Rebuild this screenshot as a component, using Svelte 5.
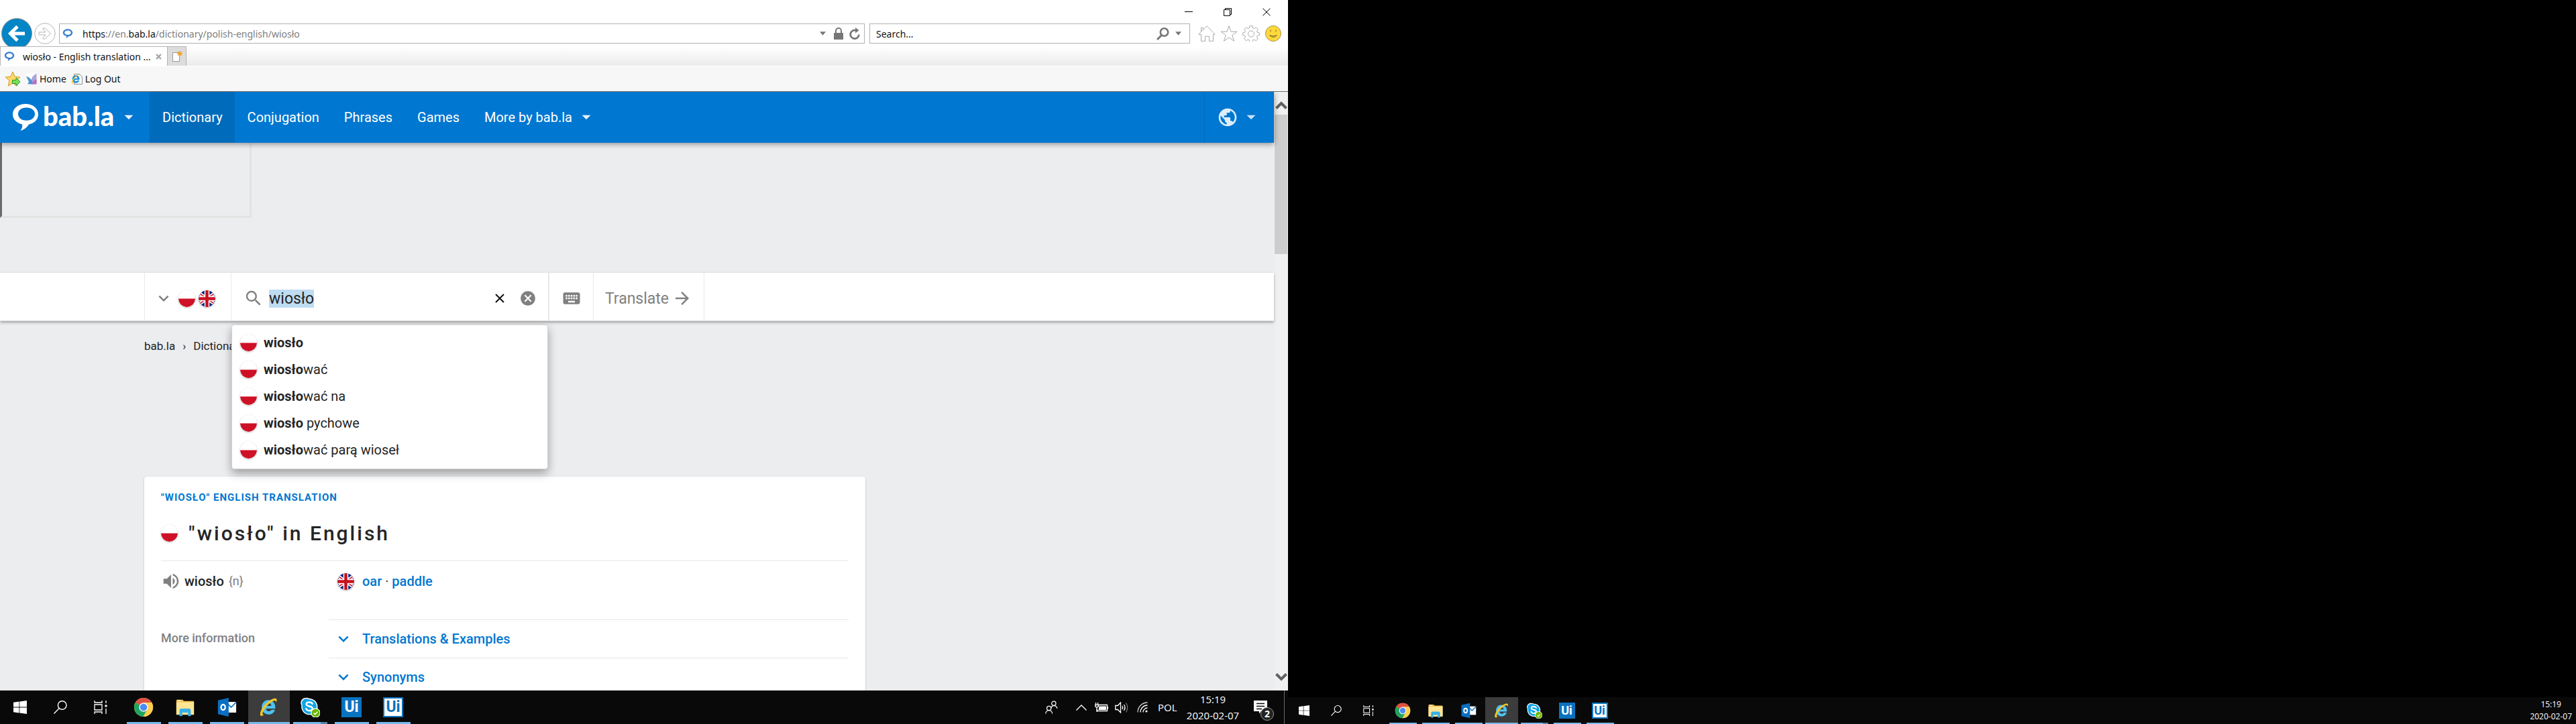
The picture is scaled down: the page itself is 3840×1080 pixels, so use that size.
<script>
  import { onMount } from 'svelte';

  let query = $state('wiosło');
  let queryBox;

  onMount(() => {
    queryBox.focus();
    queryBox.select();
  });

  const nav = ['Dictionary', 'Conjugation', 'Phrases', 'Games'];
  const suggestions = [
    ['wiosło', ''],
    ['wiosło', 'wać'],
    ['wiosło', 'wać na'],
    ['wiosło', ' pychowe'],
    ['wiosło', 'wać parą wioseł']
  ];
  const more = ['Translations & Examples', 'Synonyms'];
  const apps = [
    ['chrome', 'Chrome'],
    ['files', 'File Explorer'],
    ['outlook', 'Outlook'],
    ['ie', 'Internet Explorer'],
    ['skype', 'Skype'],
    ['ui', 'UiPath'],
    ['ui2', 'UiPath Robot']
  ];

  const icons = {
    search: 'M15.5 14h-.79l-.28-.27A6.471 6.471 0 0 0 16 9.5 6.5 6.5 0 1 0 9.5 16c1.61 0 3.09-.59 4.23-1.57l.27.28v.79l5 4.99L20.49 19l-4.99-5zm-6 0C7.01 14 5 11.99 5 9.5S7.01 5 9.5 5 14 7.01 14 9.5 11.99 14 9.5 14z',
    cancel: 'M12 2C6.47 2 2 6.47 2 12s4.47 10 10 10 10-4.47 10-10S17.53 2 12 2zm5 13.59L15.59 17 12 13.41 8.41 17 7 15.59 10.59 12 7 8.41 8.41 7 12 10.59 15.59 7 17 8.41 13.41 12 17 15.59z',
    keyboard: 'M20 5H4c-1.1 0-1.99.9-1.99 2L2 17c0 1.1.9 2 2 2h16c1.1 0 2-.9 2-2V7c0-1.1-.9-2-2-2zm-9 3h2v2h-2V8zm0 3h2v2h-2v-2zM8 8h2v2H8V8zm0 3h2v2H8v-2zm-1 2H5v-2h2v2zm0-3H5V8h2v2zm9 7H8v-2h8v2zm0-4h-2v-2h2v2zm0-3h-2V8h2v2zm3 3h-2v-2h2v2zm0-3h-2V8h2v2z',
    forward: 'M12 4l-1.41 1.41L16.17 11H4v2h12.17l-5.58 5.59L12 20l8-8z',
    volume: 'M3 9v6h4l5 5V4L7 9H3zm13.5 3c0-1.77-1.02-3.29-2.5-4.03v8.05c1.48-.73 2.5-2.25 2.5-4.02zM14 3.23v2.06c2.89.86 5 3.54 5 6.71s-2.11 5.85-5 6.71v2.06c4.01-.91 7-4.49 7-8.77s-2.99-7.86-7-8.77z',
    expand: 'M16.59 8.59L12 13.17 7.41 8.59 6 10l6 6 6-6z',
    globe: 'M12 2C6.48 2 2 6.48 2 12s4.48 10 10 10 10-4.48 10-10S17.52 2 12 2zm-1 17.93c-3.95-.49-7-3.85-7-7.93 0-.62.08-1.21.21-1.79L9 15v1c0 1.1.9 2 2 2v1.93zm6.9-2.54c-.26-.81-1-1.39-1.9-1.39h-1v-3c0-.55-.45-1-1-1H8v-2h2c.55 0 1-.45 1-1V7h2c1.1 0 2-.9 2-2v-.41c2.93 1.19 5 4.06 5 7.41 0 2.08-.8 3.97-2.1 5.39z',
    caret: 'M6 9l6 6 6-6z'
  };
</script>

{#snippet icon(name)}
  <svg class="icon" viewBox="0 0 24 24" aria-hidden="true"><path d={icons[name]} /></svg>
{/snippet}

{#snippet bubble()}
  <svg class="favicon" viewBox="0 0 16 16" aria-hidden="true">
    <path fill="#3a80cc" fill-rule="evenodd" d="M8 1.2c4.200 0 7.200 2.500 7.200 5.600 0 3-2.700 5.200-6 5.500-.9 1.200-2 2.200-3.600 2.700.5-1 .7-1.800.6-2.900C3 11.500.8 9.500.8 6.800.8 3.700 3.800 1.200 8 1.200zm0 2.300C5.200 3.500 3.200 4.900 3.200 6.700S5.200 9.900 8 9.900s4.800-1.400 4.800-3.200S10.800 3.500 8 3.500z" />
  </svg>
{/snippet}

{#snippet poland()}
  <svg class="flag" viewBox="0 0 25 25" role="img" aria-label="Polish">
    <circle cx="12.500" cy="12.500" r="12.500" fill="#fff" />
    <path d="M0 12.500h25a12.500 12.500 0 0 1-25 0z" fill="#ce1126" />
  </svg>
{/snippet}

{#snippet britain()}
  <svg class="flag" viewBox="0 0 25 25" role="img" aria-label="English">
    <clipPath id="round"><circle cx="12.500" cy="12.500" r="12.500" /></clipPath>
    <g clip-path="url(#round)">
      <path fill="#00247d" d="M0 0h25v25H0z" />
      <path stroke="#fff" stroke-width="5" d="M-4 1l33 23M29 1L-4 24" />
      <path stroke="#cf142b" stroke-width="1.600" d="M-4 1l33 23M29 1L-4 24" />
      <path stroke="#fff" stroke-width="7.500" d="M12.500 0v25M0 12.500h25" />
      <path stroke="#c8101f" stroke-width="4.500" d="M12.500 0v25M0 12.500h25" />
    </g>
  </svg>
{/snippet}

{#snippet explorer()}
  <path d="M16 4.500c6.200 0 11 4.600 11 11.300v2.300H12.300c.2 2.600 2 4.200 4.600 4.200 2.100 0 3.300-.8 4-2.300h5.700c-1.300 4.600-5 7.500-10 7.500C10.200 27.500 5.500 23 5.500 16S10.200 4.500 16 4.500zm-3.700 9.300h8.500c-.2-2.500-1.900-4.100-4.200-4.100-2.400 0-4 1.600-4.300 4.100z" fill="#4cc3f0" />
  <path d="M4 29.500C1 27.500 5 16 14 8.500 21 2.500 27.500.5 29 3c.8 1.300.2 3.500-.8 5.300 0-2.700-1.300-3.700-4.500-2.300-5 2-12.200 9.300-15.200 15.200-2.500 4.800-2 7.300.9 6.200-2.200 1.900-4 2.800-5.400 2.100z" fill="#f5c724" />
{/snippet}

{#snippet appIcon(kind)}
  {#if kind === 'ui' || kind === 'ui2'}
    <span class="uipath" class:light={kind === 'ui2'}>Ui</span>
  {:else}
    <svg class="appicon" viewBox="0 0 32 32" aria-hidden="true">
      {#if kind === 'chrome'}
        <circle cx="16" cy="16" r="15" fill="#fdcf4e" />
        <path d="M16 16L3 8.500A15 15 0 0 1 29 8.500H16z" fill="#dd5144" />
        <path d="M3 8.500A15 15 0 0 0 15.500 31L22 19.500 16 16z" fill="#1da462" />
        <path d="M29 8.500H16v5l6 6L15.500 31A15 15 0 0 0 29 8.500z" fill="#fdcf4e" />
        <circle cx="16" cy="16" r="7.200" fill="#f5f5f5" />
        <circle cx="16" cy="16" r="5.600" fill="#4c8bf5" />
      {:else if kind === 'files'}
        <path d="M2 5q0-1 1-1h9l2 2h15q1 0 1 1v20H2z" fill="#f0c04a" />
        <path d="M2 8h28v20H2z" fill="#ffe694" />
        <path d="M4 5.500h5" stroke="#fff" stroke-width="1.500" />
        <path d="M7 30v-9q0-3 3-3h12q3 0 3 3v9h-4.500v-5.500h-9V30z" fill="#3bb0e8" />
      {:else if kind === 'outlook'}
        <path d="M17 7.500h14v17H17z" fill="#fff" />
        <path d="M17 10l6 6 8-8" fill="none" stroke="#0b6fc4" stroke-width="1.800" />
        <path d="M2 5l17-4v30L2 27z" fill="#0a6fc2" />
        <ellipse cx="10.300" cy="16" rx="3.300" ry="4.300" fill="none" stroke="#fff" stroke-width="2.500" />
      {:else if kind === 'ie'}
        {@render explorer()}
      {:else}
        <path d="M9 1a8 8 0 0 1 6 1.200A13 13 0 0 1 28 17.500 8 8 0 0 1 17 28 13 13 0 0 1 2.500 13 8 8 0 0 1 9 1z" fill="#fff" />
        <path d="M9.500 2.500a7 7 0 0 1 5 1.200A11.500 11.500 0 0 1 26.500 17 7 7 0 0 1 17 26.500 11.500 11.500 0 0 1 4 13 7 7 0 0 1 9.500 2.500z" fill="#12a5e3" />
        <path d="M20 10.500c-1-2-2.600-2.500-5-2.500-2.700 0-4.700 1.200-4.700 3.200 0 4.400 9.700 2 9.700 6.700 0 2.300-2 3.600-4.800 3.600-2.600 0-4.500-1-5.300-3.200" fill="none" stroke="#fff" stroke-width="2.600" stroke-linecap="round" />
        <circle cx="25" cy="25" r="7" fill="#6bb700" stroke="#fff" stroke-width="1.200" />
        <path d="M22 25.200l2.200 2.200 4-4.200" fill="none" stroke="#fff" stroke-width="1.600" />
      {/if}
    </svg>
  {/if}
{/snippet}

{#snippet launchers()}
  <div class="launch">
    <button aria-label="Start">
      <svg class="sys" viewBox="0 0 20 20"><path fill="#fff" d="M0 2.800l8.500-1.200v8H0zM9.300 1.500L20 0v9.600H9.300zM0 10.400h8.500v8L0 17.200zM9.300 10.400H20V20L9.300 18.500z" /></svg>
    </button>
    <button aria-label="Search">
      <svg class="sys" viewBox="0 0 20 20" fill="none" stroke="#fff" stroke-width="1.400"><circle cx="12.700" cy="7" r="6.300" /><path d="M8.300 11.500L.5 19.500" /></svg>
    </button>
    <button aria-label="Task view">
      <svg class="sys" viewBox="0 0 20 20" fill="none" stroke="#fff" stroke-width="1.300"><path d="M1 0v3h11V0M1 6h11v8H1zM1 20v-3h11v3M18 0v4M18 12v8" /><path fill="#fff" stroke="none" d="M16.500 6.500h3v3h-3z" /></svg>
    </button>
  </div>
  <div class="apps">
    {#each apps as [kind, label]}
      <button class="app {kind}" aria-label={label}>{@render appIcon(kind)}</button>
    {/each}
  </div>
{/snippet}

<div class="desktop">
  <section class="monitor">
    <div class="browser">
      <div class="titlebar">
        <button aria-label="Minimise"><svg viewBox="0 0 12 12"><path d="M0 5.500h12" /></svg></button>
        <button aria-label="Restore"><svg viewBox="0 0 12 12"><path d="M.5 2.500h9v9h-9zM2.500 2.500v-2h9v9h-2" /></svg></button>
        <button aria-label="Close"><svg viewBox="0 0 12 12"><path d="M.5.500l11 11M11.500.500l-11 11" /></svg></button>
      </div>

      <div class="toolbar">
        <button class="back" aria-label="Back">
          <svg viewBox="0 0 46 46"><circle cx="23" cy="23" r="22.500" fill="#0485c6" stroke="#8c8c8c" /><path d="M35 23H14M24 12.500L13.500 23 24 33.500" fill="none" stroke="#fff" stroke-width="5" /></svg>
        </button>
        <button class="next" aria-label="Forward">
          <svg viewBox="0 0 32 32" fill="#fff" stroke="#b4b4b4"><circle cx="16" cy="16" r="15.300" /><path d="M7 14h10l-4-4.500V8h3l8.500 8-8.500 8h-3v-1.500l4-4.500H7z" stroke-linejoin="round" /></svg>
        </button>
        <div class="address">
          {@render bubble()}
          <span class="url"><b>https</b>://en.<b>bab.la</b>/dictionary/polish-english/wiosło</span>
          <svg class="drop" viewBox="0 0 10 6"><path d="M0 0h10L5 6z" /></svg>
          <svg class="lock" viewBox="0 0 14 18"><path d="M0 8h14v10H0z" /><path d="M3 8V5a4 4 0 0 1 8 0v3" fill="none" stroke="#777" stroke-width="2" /></svg>
          <button class="reload" aria-label="Refresh"><svg viewBox="0 0 16 19"><path d="M12 5.500A6.300 6.300 0 1 0 14.300 10.500" fill="none" stroke="#777" stroke-width="2.800" /><path d="M9 0l5.500 4.200L9 8.500z" fill="#777" /></svg></button>
        </div>
        <div class="find">
          <input type="text" placeholder="Search..." aria-label="Search the web" />
          <svg class="lens" viewBox="0 0 19 19" fill="none" stroke="#777"><circle cx="11.500" cy="7" r="5.700" stroke-width="2.600" /><path d="M7.500 11.500l-6.500 6.500" stroke-width="3" /></svg>
          <svg class="drop" viewBox="0 0 10 6"><path d="M0 0h10L5 6z" /></svg>
        </div>
        <div class="tools">
          <button aria-label="Home"><svg viewBox="0 0 26 24"><path d="M.8 13L13 .8 25.200 13l-1 .8-1.700-.5v10h-6v-7h-6v7h-6v-10l-2.500.5zM4.500 9V3.500h3V6" /></svg></button>
          <button aria-label="Favourites"><svg viewBox="0 0 26 24"><path d="M13 .8l3 8.400h9l-7.200 5.300 2.700 8.700L13 18l-7.500 5.200 2.700-8.700L1 9.200h9z" /></svg></button>
          <button aria-label="Settings"><svg viewBox="0 0 26 24"><path d="M10.800.8h4.400l.5 3 2 .9 2.600-1.900 3 3-1.800 2.600.8 2 3 .6v3.600l-3 .6-.8 2 1.800 2.600-3 3-2.600-1.800-2 .8-.5 2.900h-4.400l-.5-2.900-2-.8-2.600 1.800-3-3L4.500 17.200l-.8-2-3-.6V11l3-.6.8-2L2.700 5.800l3-3 2.600 1.900 2-.9z" /><circle cx="13" cy="12.500" r="4.500" /></svg></button>
          <button aria-label="Feedback"><svg viewBox="0 0 26 24"><circle cx="13" cy="12" r="11.500" fill="#ffd83b" stroke="#a3965c" /><path d="M9 6.500v3M17 6.500v3M7.500 14.500q5.500 6 11 0-5.500 3-11 0z" stroke="#7c6a2b" /></svg></button>
        </div>
      </div>

      <div class="tabs">
        <div class="tab">
          {@render bubble()}
          <span>wiosło - English translation ...</span>
          <button aria-label="Close tab"><svg viewBox="0 0 9 9"><path d="M1 1l7 7M8 1L1 8" stroke="#a5a5a5" stroke-width="2.400" /></svg></button>
        </div>
        <button class="newtab" aria-label="New tab">
          <svg viewBox="0 0 16 16"><path d="M1.500 2.500h10v13h-10z" fill="#fff" stroke="#999" /><path d="M12 0v8M8 4h8M9.200 1.200l5.600 5.600M14.800 1.200L9.200 6.800" stroke="#f2a32b" stroke-width="1.400" /></svg>
        </button>
      </div>

      <div class="bookmarks">
        <svg class="star" viewBox="0 0 24 24"><path d="M12 1l3.200 7.300 7.800.8-5.900 5.200 1.700 7.900L12 18.300l-6.800 3.900 1.700-7.900L1 9.100l7.800-.8z" fill="#ffd866" stroke="#cf9c2c" /><path d="M11.500 13.500h5.500V10l6 6-6 6v-3.500h-5.500z" fill="#7be05a" stroke="#23962d" /></svg>
        <a href="#home">
          <svg viewBox="0 0 16 16"><path d="M0 0h16v16H0z" fill="#fff" /><path d="M15.500 0v15.500H7C6 10 9 2 15.500 0z" fill="#a9a4d8" /><path d="M0 4c5 1 9 5 10 11.500H2L4 12z" fill="#4f93cf" /><path d="M9 15.500c0-3 3-6 6.500-7v7z" fill="#b86cc0" /></svg>
          Home
        </a>
        <a href="#logout">
          <svg viewBox="0 0 16 16"><path d="M3.500.500h8l4 4v11h-12z" fill="#fff" stroke="#8a8a8a" /><g transform="translate(-2 0) scale(.5)"><path d="M16 4.500c6.200 0 11 4.600 11 11.300v2.300H12.300c.2 2.600 2 4.200 4.600 4.200 2.100 0 3.300-.8 4-2.300h5.700c-1.300 4.600-5 7.500-10 7.500C10.200 27.500 5.500 23 5.500 16S10.200 4.500 16 4.500zm-3.700 9.300h8.500c-.2-2.500-1.900-4.100-4.200-4.100-2.400 0-4 1.600-4.300 4.100z" fill="#1a8fe0" /><path d="M4 29.500C1 27.500 5 16 14 8.500 21 2.500 27.500.5 29 3c-8 0-16 9-21 18-2 5-2 7 1 6.400-2.200 1.900-4 2.800-5 2.100z" fill="#f5c724" /></g></svg>
          Log Out
        </a>
      </div>

      <div class="viewport">
        <div class="page">
          <header>
            <a class="logo" href="#top">
              <svg viewBox="0 0 38 40"><path fill="#fff" fill-rule="evenodd" d="M19 0c11 0 19 6.500 19 15.500 0 8.500-6.500 13.500-14 15-2.500 4-6 7.500-12.500 9.500 2.500-3.500 3-6 2.500-9.500C5.500 28.500 0 23 0 15.500 0 6.500 8 0 19 0zm1.500 5.500C13 5.500 8 9.500 8 15s5 9.800 12.500 9.800S33 20.500 33 15 28 5.500 20.500 5.500z" /></svg>
              <span>bab.la</span>
              {@render icon('caret')}
            </a>
            <nav>
              {#each nav as item, i}
                <a href="#nav" class:active={i === 0}>{item}</a>
              {/each}
              <a href="#nav">More by bab.la {@render icon('caret')}</a>
            </nav>
            <button class="lang" aria-label="Site language">{@render icon('globe')}{@render icon('caret')}</button>
          </header>

          <div class="adframe"></div>

          <form class="searchbar">
            <button type="button" class="pair" aria-label="Languages">
              {@render icon('expand')}{@render poland()}{@render britain()}
            </button>
            <div class="field">
              {@render icon('search')}
              <input type="text" aria-label="Word to translate" bind:value={query} bind:this={queryBox} />
              <button type="button" class="clear" aria-label="Clear text"><svg viewBox="0 0 14 14"><path d="M1 1l12 12M13 1L1 13" stroke="#111" stroke-width="2" /></svg></button>
              <button type="button" class="cancel" aria-label="Cancel">{@render icon('cancel')}</button>
              <ul class="suggest">
                {#each suggestions as [hit, rest]}
                  <li>{@render poland()}<span><b>{hit}</b>{rest}</span></li>
                {/each}
              </ul>
            </div>
            <button type="button" class="keys" aria-label="Keyboard">{@render icon('keyboard')}</button>
            <button type="button" class="translate">Translate {@render icon('forward')}</button>
          </form>

          <div class="crumbs"><a href="#top">bab.la</a><span>›</span><a href="#dict">Dictionary</a></div>

          <article>
            <h2>"WIOSŁO" ENGLISH TRANSLATION</h2>
            <h1>{@render poland()}"wiosło" in English</h1>
            <div class="entry">
              <div class="word">{@render icon('volume')}<b>wiosło</b><i>{'{n}'}</i></div>
              <div class="result">{@render britain()}<span><a href="#oar">oar</a> · <a href="#paddle">paddle</a></span></div>
            </div>
            <div class="entry info">
              <div class="label">More information</div>
              <div>
                {#each more as item}
                  <a class="row" href="#more">{@render icon('expand')}{item}</a>
                {/each}
              </div>
            </div>
          </article>
        </div>
        <div class="scroll">
          <svg viewBox="0 0 18 12"><path d="M1.500 10.500L9 3l7.500 7.500" /></svg>
          <div class="thumb"></div>
          <svg viewBox="0 0 18 12"><path d="M1.500 1.500L9 9l7.500-7.500" /></svg>
        </div>
      </div>
    </div>

    <footer class="taskbar">
      {@render launchers()}
      <div class="tray">
        <svg class="people" viewBox="0 0 20 20"><circle cx="13.500" cy="4" r="3.300" /><path d="M9.500 11.500q1-4 4-4 4.500 0 5.500 4.500" /><circle cx="6" cy="11.500" r="3.300" /><path d="M.8 20q.5-5 5.200-5t5.200 5" /></svg>
        <svg class="up" viewBox="0 0 16 9"><path d="M.5 8.500L8 1l7.500 7.500" /></svg>
        <svg class="battery" viewBox="0 0 20 15"><path d="M5 3.500h13.500v9H3.500V10" /><path fill="#fff" stroke="none" d="M6.500 5.500H17v5.500H5.500zM19 6h1v4h-1z" /><path d="M1.500 0v3M4.500 0v3M.5 3.500h5v2q-2.500 3-5 0zM3 7v7" /></svg>
        <svg class="volume" viewBox="0 0 20 17"><path d="M.8 5.500h3.500L8.500 1v15L4.300 11.500H.8z" /><path d="M11 6q1.500 2.500 0 5M13.500 4q3 4.500 0 9" /><path d="M16.500 1.500q4.500 7 0 14" opacity=".45" /></svg>
        <svg class="wifi" viewBox="0 0 16 16"><path d="M1 15.500A14.500 14.500 0 0 1 15.500 1" opacity=".8" /><path d="M5 15.500A10.500 10.500 0 0 1 15.500 5M9 15.500A6.500 6.500 0 0 1 15.500 9" /><circle cx="14" cy="14" r="1.600" fill="#fff" stroke="none" /></svg>
        <span class="kb">POL</span>
        <time><span>15:19</span><span>2020-02-07</span></time>
        <button class="notes" aria-label="Notifications">
          <svg viewBox="0 0 20 20"><path d="M0 0h20v16h-9l-3 3.500V16H0z" fill="#fff" stroke="none" /><path d="M4 4.500h12M4 8.500h12M4 12.500h8" stroke="#0a0a0a" /></svg>
          <span>2</span>
        </button>
      </div>
    </footer>
  </section>

  <section class="monitor second">
    <footer class="taskbar small">
      {@render launchers()}
      <div class="tray"><time><span>15:19</span><span>2020-02-07</span></time></div>
    </footer>
  </section>
</div>

<style>
  :global(body) { margin: 0; background: #000; }
  * { box-sizing: border-box; }
  button { border: 0; padding: 0; background: none; font: inherit; color: inherit; display: flex; align-items: center; justify-content: center; }
  a { color: inherit; text-decoration: none; }
  svg { display: block; flex: none; }
  input { border: 0; outline: 0; padding: 0; background: none; min-width: 0; flex: 1; }
  b { font-weight: 500; }
  .icon { width: 30px; height: 30px; fill: currentColor; }
  .flag { width: 25px; height: 25px; border-radius: 50%; box-shadow: 0 1px 3px #0004; }
  .favicon { width: 16px; height: 16px; }

  .desktop { display: grid; grid-template-columns: 1fr 1fr; height: 100vh; overflow: hidden; font-family: "Open Sans", "Noto Sans", sans-serif; }
  .monitor { display: flex; flex-direction: column; min-width: 0; min-height: 0; }
  .second { justify-content: flex-end; background: #000; }

  .browser { flex: 1; min-height: 0; display: flex; flex-direction: column; background: #fff; font-family: "Noto Sans", sans-serif; font-size: 14px; color: #111; }
  .titlebar { height: 27px; display: flex; justify-content: flex-end; align-items: flex-end; padding: 0 26px 3px; gap: 46px; }
  .titlebar svg { width: 12px; height: 12px; fill: none; stroke: #000; }

  .toolbar { height: 42px; display: flex; align-items: center; padding: 0 9px 0 2px; overflow: hidden; }
  .back svg { width: 46px; height: 46px; }
  .back { align-self: flex-start; }
  .next { margin: 4px 5px 0 3px; align-self: flex-start; padding-top: 3px; }
  .next svg { width: 32px; height: 32px; }
  .address, .find { height: 30px; display: flex; align-items: center; border: 1px solid #b1b1b1; margin-top: 4px; }
  .address { flex: 1; padding: 0 6px 0 4px; }
  .url { flex: 1; margin-left: 14px; color: #808080; white-space: nowrap; }
  .url b { font-weight: 400; color: #111; }
  .drop { width: 9px; height: 6px; fill: #777; }
  .lock { width: 14px; height: 18px; fill: #777; margin: 0 9px 0 12px; }
  .reload svg { width: 16px; height: 19px; }
  .find { width: 478px; margin-left: 7px; padding: 0 12px 0 9px; }
  .find input { font: inherit; }
  .find input::placeholder { color: #111; opacity: 1; }
  .lens { width: 19px; height: 19px; margin-right: 9px; }
  .tools { display: flex; gap: 7px; margin: 4px 0 0 12px; }
  .tools svg { width: 26px; height: 24px; fill: none; stroke: #a9a9a9; }

  .tabs { height: 30px; display: flex; background: linear-gradient(#fff, #ebebeb); border-bottom: 1px solid #fff; }
  .tab { width: 249px; display: flex; align-items: center; padding: 0 8px 0 5px; background: #fff; border: 1px solid #b4b4b4; border-width: 1px 0 0 1px; white-space: nowrap; }
  .tab span { flex: 1; margin-left: 12px; }
  .tab button svg { width: 9px; height: 9px; }
  .newtab { width: 29px; background: #dcdcdc; border: 1px solid #b4b4b4; border-bottom: 0; }
  .newtab svg { width: 16px; height: 16px; }
  .bookmarks { height: 38px; display: flex; align-items: center; gap: 8px; padding-left: 7px; background: #f7f7f7; border-bottom: 1px solid #6d6d6d; }
  .bookmarks a { display: flex; align-items: center; gap: 4px; }
  .bookmarks a svg { width: 16px; height: 16px; }
  .bookmarks .star { width: 24px; height: 24px; }

  .viewport { flex: 1; min-height: 0; display: flex; overflow: hidden; background: #ecedef; font-family: Roboto, sans-serif; color: #252525; }
  .page { flex: 1; min-width: 0; }
  .scroll { width: 21px; display: flex; flex-direction: column; align-items: center; background: #f0f0f0; padding: 14px 1px; }
  .scroll svg { width: 18px; height: 12px; fill: none; stroke: #606060; stroke-width: 4; }
  .thumb { width: 100%; height: 208px; margin: 8px 0 auto; background: #cdcdcd; }

  header { height: 76px; display: flex; align-items: stretch; background: #0077d1; color: #fff; font-size: 20px; box-shadow: 0 2px 8px #0006; position: relative; }
  .logo { width: 223px; display: flex; align-items: center; padding-left: 19px; }
  .logo > svg:first-child { width: 38px; height: 40px; }
  .logo span { font: 900 40px/48px Lato, sans-serif; margin: 0 9px 4px 7px; }
  .logo .icon, .lang .icon:last-child, nav .icon { width: 26px; height: 26px; opacity: .9; }
  nav { display: flex; }
  nav a { display: flex; align-items: center; padding: 0 18px 0 19px; white-space: nowrap; }
  nav .icon { margin: 0 -6px 0 8px; }
  nav .active { background: #006bbb; }
  .lang { width: 104px; gap: 6px; padding-right: 4px; margin-left: auto; border-left: 1px solid #0069b9; color: #deedfa; }
  .lang .icon:first-child { width: 32px; height: 32px; }

  .adframe { width: 375px; height: 112px; border: solid; border-width: 0 3px 3px; border-color: #e2e2e2 #e2e2e2 #e2e2e2 #6a6a6a; }
  .searchbar { display: flex; height: 72px; margin-top: 82px; padding-left: 215px; background: #fff; box-shadow: 0 2px 4px #0005; position: relative; color: #808080; border-bottom: 1px solid #e0e0e0; }
  .searchbar > * { border-left: 1px solid #e8e8e8; padding-top: 5px; }
  .pair { width: 129px; gap: 5px; padding-right: 10px; }
  .pair .icon { margin-right: 2px; }
  .field { position: relative; width: 473px; display: flex; align-items: center; padding: 5px 17px 0 18px; }
  .field input { font: 400 23px/27px Roboto, sans-serif; color: #252525; margin-left: 8px; caret-color: transparent; }
  .field input::selection { background: #bedcf2; color: #252525; }
  .clear svg { width: 14px; height: 14px; }
  .cancel { margin-left: 22px; }
  .cancel .icon { width: 26px; height: 26px; }
  .keys { width: 67px; border-left-width: 2px; }
  .translate { width: 166px; gap: 5px; font-size: 23px; border-right: 1px solid #e8e8e8; }
  .suggest { position: absolute; left: 0; top: 77px; width: 472px; margin: 0; padding: 6px 12px 8px; list-style: none; background: #fff; border: 1px solid #d2d2d2; border-radius: 4px; box-shadow: 0 6px 14px #0005; color: #252525; font-size: 20px; z-index: 2; }
  .suggest li { display: flex; align-items: center; gap: 10px; height: 40px; }
  .suggest b { font-weight: 700; }

  .crumbs { display: flex; gap: 11px; padding: 25px 0 0 215px; font-size: 17px; line-height: 24px; }
  article { width: 1075px; max-width: calc(100% - 215px); margin: 183px 0 0 215px; padding: 21px 25px; background: #fff; border-radius: 4px; box-shadow: 0 1px 3px #0003; }
  h2 { margin: 0; font-size: 15px; line-height: 20px; font-weight: 700; letter-spacing: 1px; color: #0077d1; }
  h1 { margin: 0; display: flex; align-items: center; gap: 16px; height: 85px; padding-top: 2px; font-size: 30px; font-weight: 500; letter-spacing: 3px; border-bottom: 1px solid #e6e6e6; }
  .entry { display: grid; grid-template-columns: 250px 1fr; font-size: 20px; line-height: 24px; }
  .word, .result { display: flex; align-items: center; height: 60px; }
  .word b { margin: 0 7px 0 5px; }
  .word i, .word .icon { color: #808080; font-style: normal; }
  .word i { font-size: 18px; }
  .result { padding-left: 13px; gap: 12px; margin-bottom: 27px; }
  .result a, .row { color: #0077d1; font-weight: 500; }
  .label { font-size: 18px; font-weight: 500; color: #808080; padding-top: 16px; }
  .row { display: flex; align-items: center; gap: 13px; height: 57px; padding-left: 7px; border-top: 1px solid #e6e6e6; }

  .taskbar { height: 50px; flex: none; display: flex; background: #090909; color: #fff; }
  .launch { display: flex; margin-right: 4px; }
  .launch button { width: 60px; }
  .sys { width: 20px; height: 20px; }
  .apps { display: flex; }
  .app { width: 62px; position: relative; padding-right: 2px; }
  .app::after { content: ""; position: absolute; bottom: 0; left: 5px; right: 6px; height: 3px; background: #76b9ed; }
  .app.ie { background: #3c3c3c; }
  .app.ie::after { left: 0; right: 0; }
  .app.skype::after { background: linear-gradient(90deg, #76b9ed 80%, #5684a9 80%); }
  .appicon { width: 30px; height: 30px; }
  .uipath { width: 30px; height: 30px; border: 2px solid #0972bf; background: #0972bf; color: #fff; font: 700 23px/26px Roboto, sans-serif; }
  .uipath.light { background: #fff; color: #0972bf; }
  .tray { display: flex; align-items: center; margin-left: auto; font-size: 15px; padding-right: 5px; }
  .tray svg { fill: none; stroke: #fff; stroke-width: 1.300; }
  .people { width: 19px; height: 20px; margin-right: 27px; }
  .up { width: 16px; height: 9px; margin-right: 12px; }
  .battery { width: 20px; height: 15px; margin-right: 10px; }
  .volume { width: 20px; height: 17px; margin-right: 13px; }
  .wifi { width: 16px; height: 16px; margin-right: 15px; }
  .kb { width: 26px; }
  time { display: flex; flex-direction: column; align-items: center; width: 112px; line-height: 24px; }
  .notes { position: relative; align-self: stretch; width: 51px; border-right: 1px solid #6a6a6a; padding-right: 20px; }
  .notes svg { width: 20px; height: 20px; }
  .notes span { position: absolute; left: 15px; bottom: 5px; width: 20px; height: 20px; border: 1px solid #999; border-radius: 50%; background: #222; font-size: 14px; line-height: 17px; font-weight: 700; }

  .small { height: 40px; }
  .small .launch { margin: 0 3px 0 0; }
  .small .launch button { width: 48px; }
  .small .sys { width: 16px; height: 16px; }
  .small .app { width: 49px; }
  .small .app::after { height: 2px; left: 4px; right: 4px; }
  .small .app.ie::after { left: 0; right: 0; }
  .small .appicon, .small .uipath { width: 24px; height: 24px; }
  .small .uipath { font-size: 18px; line-height: 20px; }
  .small .tray { font-size: 12px; padding-right: 6px; }
  .small time { width: auto; line-height: 18px; }
</style>
